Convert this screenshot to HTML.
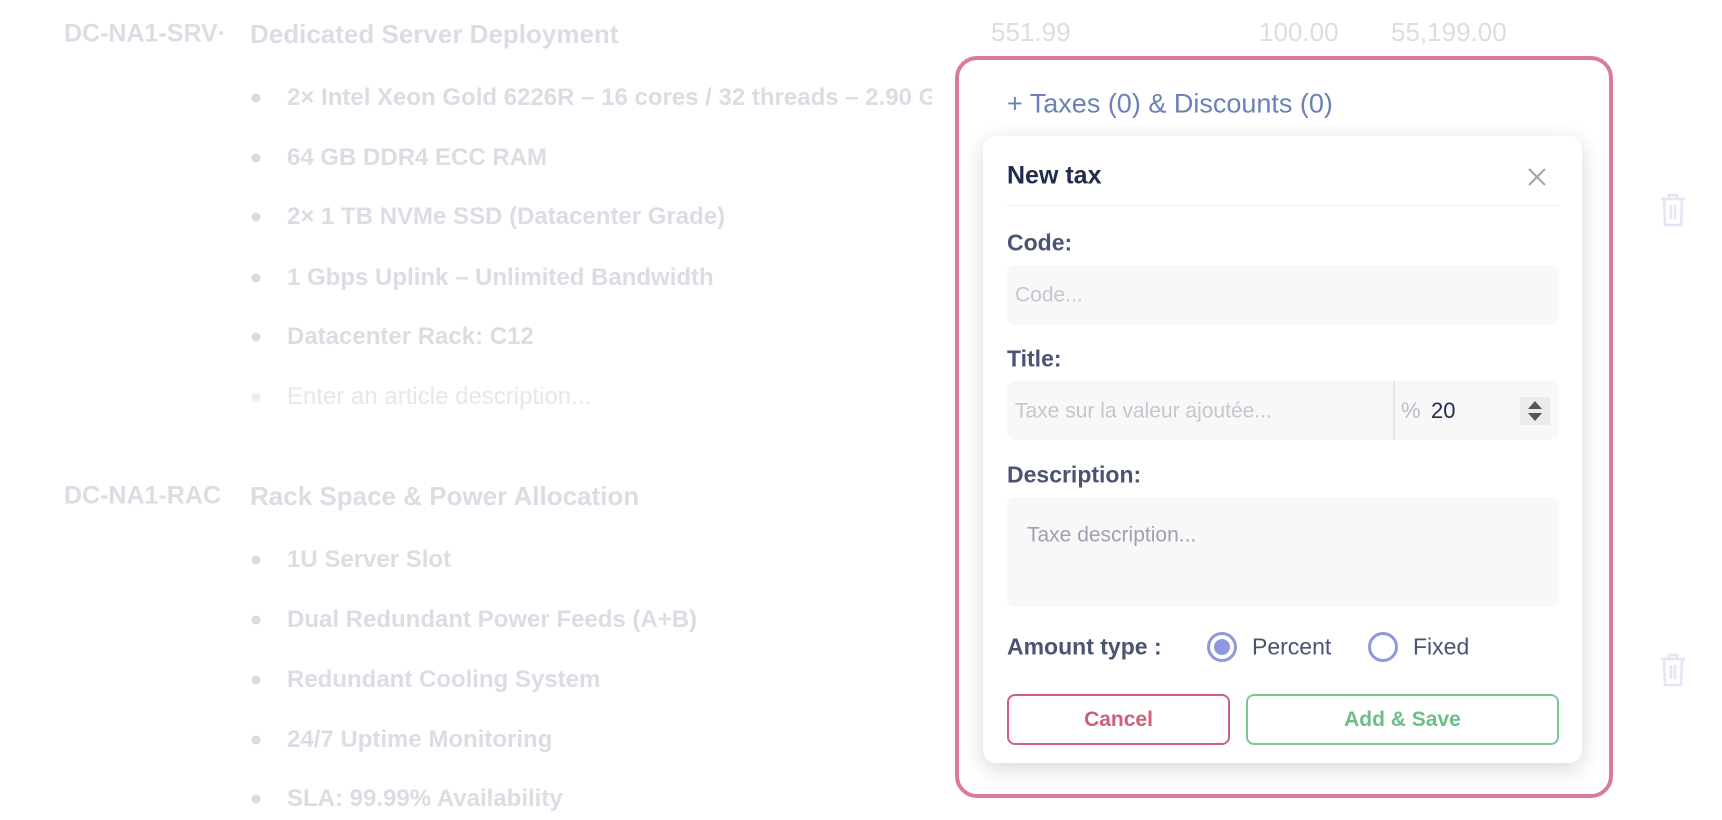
<!DOCTYPE html><html><head><meta charset="utf-8"><style>
body{margin:0;width:1722px;height:820px;background:#fff;font-family:"Liberation Sans",sans-serif;position:relative;overflow:hidden}
.a{position:absolute;white-space:nowrap;line-height:1;transform:translateY(-50%)}
.g{color:#dcdde4;font-size:24px}
.b{font-weight:600}
.dot{position:absolute;width:9px;height:9px;border-radius:50%;background:#d9dbe2;transform:translate(-50%,-50%)}
.lbl{color:#4b5373;font-size:23px;font-weight:600}
.inp{position:absolute;background:#f8f8f9;border-radius:8px}
.ph{color:#c4c7cf;font-size:21px}
</style></head><body>
<div class="a g b" style="left:64px;top:34px;font-size:25px">DC-NA1-SRV·</div>
<div class="a g b" style="left:250px;top:34px;font-size:26px">Dedicated Server Deployment</div>
<div class="a g" style="left:991px;top:32px;font-size:26px">551.99</div>
<div class="a g" style="left:1259px;top:32px;font-size:26px">100.00</div>
<div class="a g" style="left:1391px;top:32px;font-size:26px">55,199.00</div>
<div style="position:absolute;left:0;top:0;width:932px;height:820px;overflow:hidden">
<div class="dot" style="left:256px;top:98px"></div><div class="a g b" style="left:287px;top:98px">2× Intel Xeon Gold 6226R – 16 cores / 32 threads – 2.90 GHz</div>
</div>
<div class="dot" style="left:256px;top:158px"></div><div class="a g b" style="left:287px;top:158px">64 GB DDR4 ECC RAM</div>
<div class="dot" style="left:256px;top:217px"></div><div class="a g b" style="left:287px;top:217px">2× 1 TB NVMe SSD (Datacenter Grade)</div>
<div class="dot" style="left:256px;top:278px"></div><div class="a g b" style="left:287px;top:278px">1 Gbps Uplink – Unlimited Bandwidth</div>
<div class="dot" style="left:256px;top:337px"></div><div class="a g b" style="left:287px;top:337px">Datacenter Rack: C12</div>
<div class="dot" style="left:256px;top:397px;background:#eceef2"></div><div class="a g" style="left:287px;top:397px;color:#e6e7ec">Enter an article description...</div>
<div class="a g b" style="left:64px;top:496px;font-size:25px">DC-NA1-RAC</div>
<div class="a g b" style="left:250px;top:496px;font-size:26px">Rack Space &amp; Power Allocation</div>
<div class="dot" style="left:256px;top:560px"></div><div class="a g b" style="left:287px;top:560px">1U Server Slot</div>
<div class="dot" style="left:256px;top:620px"></div><div class="a g b" style="left:287px;top:620px">Dual Redundant Power Feeds (A+B)</div>
<div class="dot" style="left:256px;top:680px"></div><div class="a g b" style="left:287px;top:680px">Redundant Cooling System</div>
<div class="dot" style="left:256px;top:740px"></div><div class="a g b" style="left:287px;top:740px">24/7 Uptime Monitoring</div>
<div class="dot" style="left:256px;top:799px"></div><div class="a g b" style="left:287px;top:799px">SLA: 99.99% Availability</div>
<svg style="position:absolute;left:1659px;top:192px" width="28" height="36" viewBox="0 0 28 36" fill="none" stroke="#e3e6f4" stroke-width="2.5"><path d="M2 7h24M10 7V3h8v4M5 7l1 26h16l1-26M12 13v14M16 13v14"/></svg>
<svg style="position:absolute;left:1659px;top:652px" width="28" height="36" viewBox="0 0 28 36" fill="none" stroke="#e3e6f4" stroke-width="2.5"><path d="M2 7h24M10 7V3h8v4M5 7l1 26h16l1-26M12 13v14M16 13v14"/></svg>
<div style="position:absolute;left:955px;top:56px;width:650px;height:734px;border:4px solid #d97b9c;border-radius:22px"></div>
<div class="a" style="left:1007px;top:104px;color:#6b80b7;font-size:27px">+ Taxes (0) &amp; Discounts (0)</div>
<div style="position:absolute;left:983px;top:136px;width:599px;height:627px;background:#fff;border-radius:13px;box-shadow:0 6px 22px rgba(0,0,0,.16)"></div>
<div class="a" style="left:1007px;top:176px;color:#232c4b;font-size:25px;font-weight:600">New tax</div>
<svg style="position:absolute;left:1527px;top:167px" width="20" height="20" viewBox="0 0 20 20" stroke="#a5a5a5" stroke-width="2"><path d="M2 2l16 16M18 2L2 18"/></svg>
<div style="position:absolute;left:1007px;top:205px;width:552px;height:1px;background:#eceef1"></div>
<div class="a lbl" style="left:1007px;top:243px">Code:</div>
<div class="inp" style="left:1007px;top:265px;width:552px;height:60px"></div>
<div class="a ph" style="left:1015px;top:295px">Code...</div>
<div class="a lbl" style="left:1007px;top:359px">Title:</div>
<div class="inp" style="left:1007px;top:381px;width:552px;height:59px"></div>
<div style="position:absolute;left:1393px;top:381px;width:2px;height:59px;background:#e4e5e8"></div>
<div class="a ph" style="left:1015px;top:411px">Taxe sur la valeur ajoutée...</div>
<div class="a" style="left:1401px;top:411px;color:#b8bcc6;font-size:22px">%</div>
<div class="a" style="left:1431px;top:411px;color:#232c4b;font-size:22px">20</div>
<div style="position:absolute;left:1520px;top:397px;width:30px;height:28px;background:#ececec"></div>
<svg style="position:absolute;left:1526px;top:399px" width="18" height="24" viewBox="0 0 18 24"><path d="M9 2l7 8H2zM9 22l7-8H2z" fill="#555"/></svg>
<div class="a lbl" style="left:1007px;top:475px">Description:</div>
<div class="inp" style="left:1007px;top:497px;width:552px;height:110px"></div>
<div class="a ph" style="left:1027px;top:535px;color:#9ea2ae">Taxe description...</div>
<div class="a lbl" style="left:1007px;top:647px">Amount type :</div>
<div style="position:absolute;left:1207px;top:632px;width:24px;height:24px;border:3px solid #8f98de;border-radius:50%"></div>
<div style="position:absolute;left:1214px;top:639px;width:16px;height:16px;background:#8f98de;border-radius:50%"></div>
<div class="a" style="left:1252px;top:647px;color:#4b5373;font-size:23px">Percent</div>
<div style="position:absolute;left:1368px;top:632px;width:24px;height:24px;border:3px solid #8f98de;border-radius:50%"></div>
<div class="a" style="left:1413px;top:647px;color:#4b5373;font-size:23px">Fixed</div>
<div style="position:absolute;left:1007px;top:694px;width:219px;height:47px;border:2px solid #d0607a;border-radius:8px;color:#d0607a;font-size:21px;font-weight:600;display:flex;align-items:center;justify-content:center">Cancel</div>
<div style="position:absolute;left:1246px;top:694px;width:309px;height:47px;border:2px solid #7cc596;border-radius:8px;color:#6cbf86;font-size:21px;font-weight:600;display:flex;align-items:center;justify-content:center">Add &amp; Save</div>
</body></html>
